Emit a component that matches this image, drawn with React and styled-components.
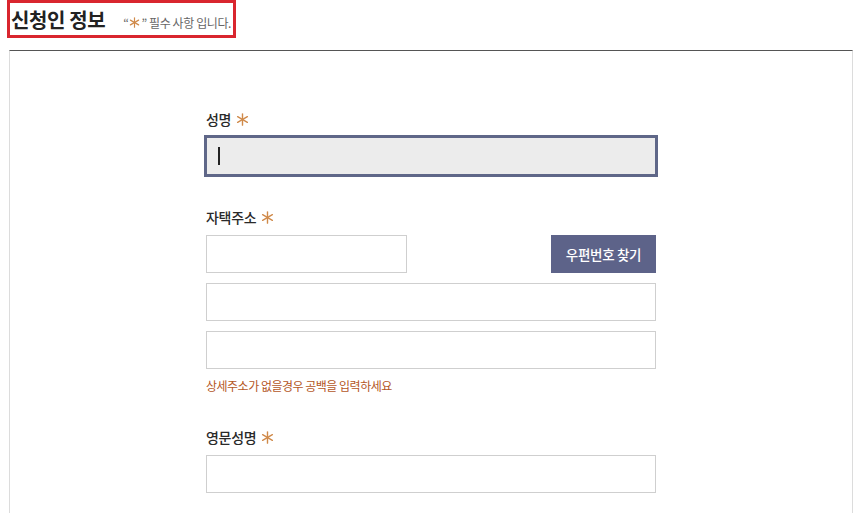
import React from 'react'
import styled, { createGlobalStyle } from 'styled-components'

const Global = createGlobalStyle`
  body {
    margin: 0;
    background: #fff;
    font-family: "Noto Sans CJK KR", "Noto Sans", sans-serif;
    color: #333;
  }
`

const Page = styled.div`
  width: 861px;
  overflow: hidden;
`

const TitleBox = styled.div`
  display: inline-flex;
  align-items: baseline;
  box-sizing: border-box;
  height: 38px;
  margin-left: 7px;
  padding: 2px 2px 0 1px;
  border: 3px solid #d9262f;
`

const Title = styled.h2`
  margin: 0;
  font-size: 20px;
  font-weight: 700;
  letter-spacing: -0.4px;
  color: #222;
`

const Note = styled.span`
  display: inline-flex;
  align-items: center;
  margin-left: 18px;
  font-size: 12px;
  letter-spacing: -0.4px;
  color: #666;
`

const StarIcon = styled.svg`
  display: inline-block;
  margin: ${p => p.tight ? '0 1px' : '0 0 0 5px'};
`

const Star = ({ size = 13, tight }) => (
  <StarIcon tight={tight} width={size} height={size} viewBox="0 0 12 12">
    <g stroke="#d08a4a" strokeWidth="1.3" strokeLinecap="round">
      <line x1="6" y1="0.8" x2="6" y2="11.2" />
      <line x1="1.5" y1="3.4" x2="10.5" y2="8.6" />
      <line x1="1.5" y1="8.6" x2="10.5" y2="3.4" />
    </g>
  </StarIcon>
)

const Panel = styled.div`
  box-sizing: border-box;
  width: 844px;
  min-height: 480px;
  margin: 12px 0 0 9px;
  padding-top: 58px;
  border-top: 1px solid #555;
  border-left: 1px solid #dcdcdc;
  border-right: 1px solid #dcdcdc;
`

const Form = styled.div`
  width: 450px;
  margin: 0 auto;
  display: flex;
  flex-direction: column;
  gap: 32px;
`

const Field = styled.div`
  display: flex;
  flex-direction: column;
`

const Label = styled.label`
  display: flex;
  align-items: center;
  height: 20px;
  margin-bottom: 8px;
  font-size: 14px;
  font-weight: 500;
  letter-spacing: -0.3px;
  color: #2a2a2a;
`

const Stack = styled.div`
  display: flex;
  flex-direction: column;
  gap: 10px;
`

const Row = styled.div`
  display: flex;
  justify-content: space-between;
`

const InputWrap = styled.div`
  position: relative;
`

const Input = styled.input`
  box-sizing: border-box;
  width: ${p => p.width || '100%'};
  height: 38px;
  margin: 0;
  padding: 0 10px;
  border: 1px solid ${p => (p.focused ? '#5f6788' : '#cfcfcf')};
  box-shadow: ${p => (p.focused ? '0 0 0 2px #5f6788' : 'none')};
  background: ${p => (p.focused ? '#ececec' : '#fff')};
  outline: none;
  font-family: inherit;
  font-size: 13px;
`

const Caret = styled.span`
  position: absolute;
  left: 12px;
  top: 10px;
  width: 2px;
  height: 18px;
  background: #222;
`

const Button = styled.button`
  box-sizing: border-box;
  width: 105px;
  height: 38px;
  padding: 0;
  border: none;
  background: #5d6389;
  color: #fff;
  font-family: inherit;
  font-size: 13.5px;
  font-weight: 500;
  letter-spacing: -0.3px;
  cursor: pointer;
`

const Hint = styled.p`
  margin: 8px 0 0;
  font-size: 12px;
  line-height: 18px;
  letter-spacing: -0.5px;
  color: #b4571f;
`

export default function App() {
  return (
    <Page>
      <Global />
      <TitleBox>
        <Title>신청인 정보</Title>
        <Note>
          “<Star size={11} tight />” 필수 사항 입니다.
        </Note>
      </TitleBox>
      <Panel>
        <Form>
          <Field>
            <Label>
              성명<Star />
            </Label>
            <InputWrap>
              <Input focused />
              <Caret />
            </InputWrap>
          </Field>

          <Field>
            <Label>
              자택주소<Star />
            </Label>
            <Stack>
              <Row>
                <Input width="201px" />
                <Button type="button">우편번호 찾기</Button>
              </Row>
              <Input />
              <Input />
            </Stack>
            <Hint>상세주소가 없을경우 공백을 입력하세요</Hint>
          </Field>

          <Field>
            <Label>
              영문성명<Star />
            </Label>
            <Input />
          </Field>
        </Form>
      </Panel>
    </Page>
  )
}
